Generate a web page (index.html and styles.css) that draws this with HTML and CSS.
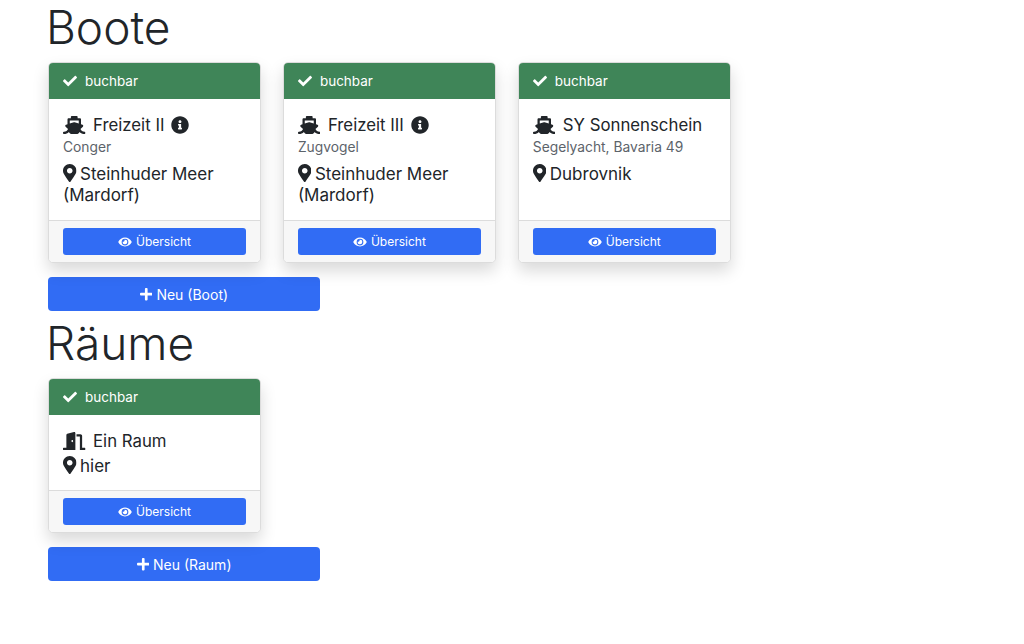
FILE: index.html
```html
<!DOCTYPE html>
<html lang="en">
<head>
    <meta charset="UTF-8">
    <title>Übersicht</title>
    <link rel="stylesheet" href="styles.css">
</head>
<body>
    <svg class="defs" width="0" height="0">
        <symbol id="i-check" viewBox="0 0 512 512"><path d="M173.898 439.404l-166.4-166.4c-9.997-9.997-9.997-26.206 0-36.204l36.203-36.204c9.997-9.998 26.207-9.998 36.204 0L192 312.69 432.095 72.596c9.997-9.997 26.207-9.997 36.204 0l36.203 36.204c9.997 9.997 9.997 26.206 0 36.204l-294.4 294.401c-9.998 9.997-26.207 9.997-36.204-.001z"/></symbol>
        <symbol id="i-ship" viewBox="0 0 640 512"><path d="M496.616 372.639l70.012-70.012c16.899-16.9 9.942-45.771-12.836-53.092L512 236.102V96c0-17.673-14.327-32-32-32h-64V24c0-13.255-10.745-24-24-24H248c-13.255 0-24 10.745-24 24v40h-64c-17.673 0-32 14.327-32 32v140.102l-41.792 13.433c-22.753 7.313-29.754 36.173-12.836 53.092l70.012 70.012C125.828 416.287 85.587 448 24 448c-13.255 0-24 10.745-24 24v16c0 13.255 10.745 24 24 24 61.023 0 107.499-20.61 143.258-59.396C181.677 487.432 216.021 512 256 512h128c39.979 0 74.323-24.568 88.742-59.396C508.495 491.384 554.968 512 616 512c13.255 0 24-10.745 24-24v-16c0-13.255-10.745-24-24-24-60.817 0-101.542-31.001-119.384-75.361zM192 128h256v87.531l-118.208-37.995a31.995 31.995 0 0 0-19.584 0L192 215.531V128z"/></symbol>
        <symbol id="i-door" viewBox="0 0 640 512"><path d="M624 448h-80V113.45C544 86.19 522.47 64 496 64H384v64h96v384h144c8.84 0 16-7.16 16-16v-32c0-8.84-7.16-16-16-16zM312.24 1.01l-192 49.74C105.99 54.44 96 67.7 96 82.92V448H16c-8.84 0-16 7.16-16 16v32c0 8.84 7.16 16 16 16h336V33.18c0-21.58-19.56-37.41-39.76-32.17zM264 288c-13.25 0-24-14.33-24-32s10.75-32 24-32 24 14.33 24 32-10.75 32-24 32z"/></symbol>
        <symbol id="i-info" viewBox="0 0 512 512"><path d="M256 8C119.043 8 8 119.083 8 256c0 136.997 111.043 248 248 248s248-111.003 248-248C504 119.083 392.957 8 256 8zm0 110c23.196 0 42 18.804 42 42s-18.804 42-42 42-42-18.804-42-42 18.804-42 42-42zm56 254c0 6.627-5.373 12-12 12h-88c-6.627 0-12-5.373-12-12v-24c0-6.627 5.373-12 12-12h12v-64h-12c-6.627 0-12-5.373-12-12v-24c0-6.627 5.373-12 12-12h64c6.627 0 12 5.373 12 12v100h12c6.627 0 12 5.373 12 12v24z"/></symbol>
        <symbol id="i-marker" viewBox="0 0 384 512"><path d="M172.268 501.67C26.97 291.031 0 262.429 0 192 0 85.961 85.961 0 192 0s192 85.961 192 192c0 70.429-26.97 99.031-172.268 309.67-9.535 13.774-29.93 13.773-39.464 0zM192 272c44.183 0 80-35.817 80-80s-35.817-80-80-80-80 35.817-80 80 35.817 80 80 80z"/></symbol>
        <symbol id="i-eye" viewBox="0 0 576 512"><path d="M572.52 241.4C518.29 135.59 410.93 64 288 64S57.68 135.64 3.48 241.41a32.35 32.35 0 0 0 0 29.19C57.71 376.41 165.07 448 288 448s230.32-71.64 284.52-177.41a32.35 32.35 0 0 0 0-29.19zM288 400a144 144 0 1 1 144-144 143.93 143.93 0 0 1-144 144zm0-240a95.31 95.31 0 0 0-25.31 3.79 47.85 47.85 0 0 1-66.9 66.9A95.78 95.78 0 1 0 288 160z"/></symbol>
        <symbol id="i-plus" viewBox="0 0 448 512"><path d="M416 208H272V64c0-17.67-14.33-32-32-32h-32c-17.67 0-32 14.33-32 32v144H32c-17.67 0-32 14.33-32 32v32c0 17.67 14.33 32 32 32h144v144c0 17.67 14.33 32 32 32h32c17.67 0 32-14.33 32-32V304h144c17.67 0 32-14.33 32-32v-32c0-17.67-14.33-32-32-32z"/></symbol>
    </svg>

    <div class="container">
        <h1>Boote</h1>
        <div class="cards">
            <div class="card">
                <div class="card-header"><svg class="icon-check"><use href="#i-check"/></svg>buchbar</div>
                <div class="card-body">
                    <div class="title"><svg class="icon-type"><use href="#i-ship"/></svg>Freizeit II<svg class="icon-info"><use href="#i-info"/></svg></div>
                    <div class="subtitle">Conger</div>
                    <div class="place"><svg class="icon-marker"><use href="#i-marker"/></svg>Steinhuder Meer (Mardorf)</div>
                </div>
                <div class="card-footer"><a class="btn-small"><svg class="icon-eye"><use href="#i-eye"/></svg>Übersicht</a></div>
            </div>
            <div class="card">
                <div class="card-header"><svg class="icon-check"><use href="#i-check"/></svg>buchbar</div>
                <div class="card-body">
                    <div class="title"><svg class="icon-type"><use href="#i-ship"/></svg>Freizeit III<svg class="icon-info"><use href="#i-info"/></svg></div>
                    <div class="subtitle">Zugvogel</div>
                    <div class="place"><svg class="icon-marker"><use href="#i-marker"/></svg>Steinhuder Meer (Mardorf)</div>
                </div>
                <div class="card-footer"><a class="btn-small"><svg class="icon-eye"><use href="#i-eye"/></svg>Übersicht</a></div>
            </div>
            <div class="card">
                <div class="card-header"><svg class="icon-check"><use href="#i-check"/></svg>buchbar</div>
                <div class="card-body">
                    <div class="title"><svg class="icon-type"><use href="#i-ship"/></svg>SY Sonnenschein</div>
                    <div class="subtitle">Segelyacht, Bavaria 49</div>
                    <div class="place"><svg class="icon-marker"><use href="#i-marker"/></svg>Dubrovnik</div>
                </div>
                <div class="card-footer"><a class="btn-small"><svg class="icon-eye"><use href="#i-eye"/></svg>Übersicht</a></div>
            </div>
        </div>
        <a class="btn-new"><svg class="icon-plus"><use href="#i-plus"/></svg>Neu (Boot)</a>

        <h1>Räume</h1>
        <div class="cards">
            <div class="card">
                <div class="card-header"><svg class="icon-check"><use href="#i-check"/></svg>buchbar</div>
                <div class="card-body">
                    <div class="title"><svg class="icon-type"><use href="#i-door"/></svg>Ein Raum</div>
                    <div class="place"><svg class="icon-marker"><use href="#i-marker"/></svg>hier</div>
                </div>
                <div class="card-footer"><a class="btn-small"><svg class="icon-eye"><use href="#i-eye"/></svg>Übersicht</a></div>
            </div>
        </div>
        <a class="btn-new"><svg class="icon-plus"><use href="#i-plus"/></svg>Neu (Raum)</a>
    </div>
</body>
</html>
```

FILE: styles.css
```css
* {
    box-sizing: border-box;
}
body {
    margin: 0;
    background: #fff;
    color: #212529;
    font-family: 'Inter', sans-serif;
    font-size: 17px;
}
svg {
    fill: currentColor;
}
.defs {
    position: absolute;
}
.container {
    padding: 0 48px;
}
h1 {
    margin: 0 0 0 -2px;
    font-size: 46px;
    font-weight: 300;
    line-height: 54px;
}
.cards {
    display: flex;
    gap: 21.9px;
    margin-top: 8px;
    margin-bottom: 14px;
}
.card {
    width: 213px;
    border: 1px solid #dcdcdc;
    border-radius: 5px;
    background: #fff;
    box-shadow: 0 8px 16px rgba(0, 0, 0, .15);
    display: flex;
    flex-direction: column;
}
.card-header {
    height: 36px;
    padding: 0 14px;
    display: flex;
    align-items: center;
    background: #3f8558;
    color: #fff;
    font-size: 13.5px;
    border-radius: 4px 4px 0 0;
}
.card-body {
    flex: 1;
    padding: 14px 14px 13px;
}
.title {
    display: flex;
    align-items: center;
    height: 24px;
    font-size: 16.8px;
    line-height: 24px;
}
.subtitle {
    font-size: 13.8px;
    line-height: 20px;
    color: #5c636a;
    margin-bottom: 7px;
}
.place {
    line-height: 21px;
    margin-top: 3px;
}
.subtitle + .place {
    margin-bottom: 1px;
}
.card-footer {
    height: 42px;
    padding: 7px 14px 0;
    background: #f7f7f7;
    border-top: 1px solid #dcdcdc;
    border-radius: 0 0 4px 4px;
}
.btn-small {
    height: 27px;
    display: flex;
    align-items: center;
    justify-content: center;
    background: #316cf4;
    color: #fff;
    font-size: 12px;
    border-radius: 3px;
}
.btn-new {
    width: 272px;
    height: 34px;
    margin-bottom: 5px;
    display: flex;
    align-items: center;
    justify-content: center;
    background: #316cf4;
    color: #fff;
    font-size: 14px;
    border-radius: 4px;
}
.icon-check {
    width: 14px;
    height: 14px;
    margin-right: 8px;
}
.icon-type {
    width: 22.5px;
    height: 18px;
    margin-right: 7.5px;
}
.icon-info {
    width: 18px;
    height: 18px;
    margin-left: 7px;
}
.icon-marker {
    width: 13.5px;
    height: 18px;
    margin-right: 3.5px;
    vertical-align: -2px;
}
.icon-eye {
    width: 14px;
    height: 12px;
    margin-right: 4px;
}
.icon-plus {
    width: 12.5px;
    height: 14.3px;
    margin-right: 4px;
}
```
